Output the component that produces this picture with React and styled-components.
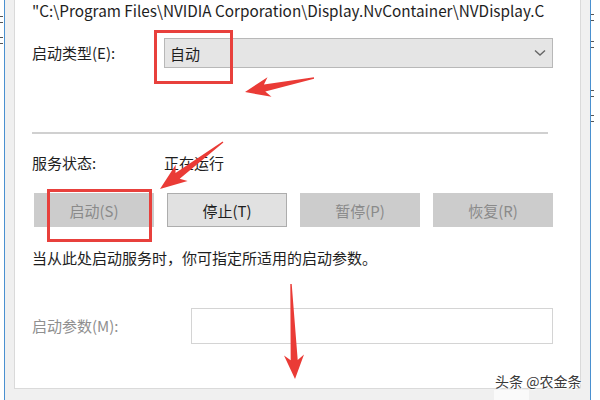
import React from "react";
import styled, { createGlobalStyle } from "styled-components";

const GlobalStyle = createGlobalStyle`
  html, body {
    margin: 0;
    padding: 0;
    background: #f0f0f0;
    overflow: hidden;
  }
  body {
    font-family: "Noto Sans CJK SC", "Noto Sans", sans-serif;
  }
`;

// arrow polygon: thin tail widening toward a swept-back head
const arrowPoints = (tail, tip, headLen, headW, neckW, tailW) => {
  const dx = tip[0] - tail[0];
  const dy = tip[1] - tail[1];
  const len = Math.hypot(dx, dy);
  const ux = dx / len;
  const uy = dy / len;
  const nx = -uy;
  const ny = ux;
  const neck = [tip[0] - ux * headLen, tip[1] - uy * headLen];
  const barb = [tip[0] - ux * (headLen + 5), tip[1] - uy * (headLen + 5)];
  const p = (base, w) => [base[0] + nx * w, base[1] + ny * w];
  const pts = [
    p(tail, tailW / 2),
    p(neck, neckW / 2),
    p(barb, headW / 2),
    tip,
    p(barb, -headW / 2),
    p(neck, -neckW / 2),
    p(tail, -tailW / 2),
  ];
  return pts.map((q) => q.map((v) => v.toFixed(1)).join(",")).join(" ");
};

const arrows = [
  { tail: [314, 78], tip: [245, 92], headLen: 20, headW: 20, neckW: 7, tailW: 1.5 },
  { tail: [223, 142], tip: [160, 189], headLen: 22, headW: 20, neckW: 7, tailW: 1.5 },
  { tail: [291, 284], tip: [295, 379], headLen: 19, headW: 20, neckW: 7, tailW: 1.5 },
];

const buttons = [
  { label: "启动(S)", active: false },
  { label: "停止(T)", active: true },
  { label: "暂停(P)", active: false },
  { label: "恢复(R)", active: false },
];

// bits of the neighbouring windows that peek in at the edges
const leftMarks = [16, 14];
const rightMarks = [14, 20, 42, 18];

const App = () => {
  return (
    <>
      <GlobalStyle />
      <Screen>
        <LeftEdge>
          {leftMarks.map((t, i) => (
            <EdgeMark key={i} $top={t} />
          ))}
        </LeftEdge>
        <BlueLine />
        <Gutter />
        <Column>
          <Panel>
            <PathText>"C:\Program Files\NVIDIA Corporation\Display.NvContainer\NVDisplay.C</PathText>

            <FieldRow $top={18}>
              <Label $width={132}>启动类型(E):</Label>
              <Combo>
                <span>自动</span>
                <svg width="12" height="8" viewBox="0 0 12 8">
                  <path d="M1 1.5 L6 6 L11 1.5" fill="none" stroke="#666" strokeWidth="1.4" />
                </svg>
              </Combo>
            </FieldRow>

            <Divider />

            <FieldRow $top={19}>
              <Label $width={132}>服务状态:</Label>
              <Value>正在运行</Value>
            </FieldRow>

            <ButtonRow>
              {buttons.map((b) => (
                <ServiceButton key={b.label} $active={b.active}>
                  {b.label}
                </ServiceButton>
              ))}
            </ButtonRow>

            <Description>当从此处启动服务时，你可指定所适用的启动参数。</Description>

            <FieldRow $top={40}>
              <Label $width={159} $muted>
                启动参数(M):
              </Label>
              <ParamInput />
            </FieldRow>
          </Panel>
          <Footer>
            <FooterPatch />
          </Footer>
        </Column>
        <Gutter />
        <BlueLine />
        <RightEdge>
          {rightMarks.map((t, i) => (
            <EdgeMark key={i} $top={t} />
          ))}
        </RightEdge>

        <Highlight $x={154} $y={30} $w={79} $h={54} />
        <Highlight $x={47} $y={189} $w={105} $h={53} />

        <Annotations width="600" height="400" viewBox="0 0 600 400">
          {arrows.map((a, i) => (
            <polygon
              key={i}
              points={arrowPoints(a.tail, a.tip, a.headLen, a.headW, a.neckW, a.tailW)}
              fill="#ea3b36"
            />
          ))}
        </Annotations>

        <Watermark>头条 @农金条</Watermark>
      </Screen>
    </>
  );
};

// styled components
const Screen = styled.div`
  position: relative;
  display: flex;
  width: 600px;
  height: 400px;
  overflow: hidden;
  background: #f0f0f0;
`;

const LeftEdge = styled.div`
  width: 4px;
  background: #ffffff;
  display: flex;
  flex-direction: column;
`;

const EdgeMark = styled.div`
  width: 3px;
  height: 7px;
  margin-top: ${(p) => p.$top}px;
  border-top: 1px solid #555;
  border-bottom: 1px solid #555;
  box-sizing: border-box;
`;

const BlueLine = styled.div`
  width: 1px;
  background: #4a90d0;
`;

const Gutter = styled.div`
  width: 9px;
  background: #f0f0f0;
`;

const Column = styled.div`
  flex: 1;
  display: flex;
  flex-direction: column;
`;

const Panel = styled.div`
  height: 389px;
  box-sizing: border-box;
  background: #ffffff;
  border: 1px solid #dadada;
  border-top: none;
  padding: 0 27px 0 17px;
  display: flex;
  flex-direction: column;
`;

const Footer = styled.div`
  flex: 1;
  background: #f0f0f0;
  padding-left: 480px;
`;

const FooterPatch = styled.div`
  width: 35px;
  height: 100%;
  margin-top: 1px;
  background: #fafafa;
`;

const PathText = styled.div`
  font-size: 15.3px;
  line-height: 20px;
  color: #1e1e1e;
  white-space: nowrap;
`;

const FieldRow = styled.div`
  display: flex;
  align-items: center;
  margin-top: ${(p) => p.$top}px;
`;

const Label = styled.div`
  width: ${(p) => p.$width}px;
  flex-shrink: 0;
  font-size: 15px;
  line-height: 20px;
  color: ${(p) => (p.$muted ? "#8f8f8f" : "#1e1e1e")};
`;

const Value = styled.div`
  font-size: 15px;
  line-height: 20px;
  color: #1e1e1e;
`;

const Combo = styled.div`
  flex: 1;
  height: 30px;
  box-sizing: border-box;
  background: #e5e5e5;
  border: 1px solid #b8b8b8;
  display: flex;
  align-items: center;
  justify-content: space-between;
  padding: 0 5px 0 5px;
  font-size: 15px;
  color: #1e1e1e;

  svg {
    margin-right: 1px;
  }
`;

const Divider = styled.div`
  height: 2px;
  margin-top: 64px;
  margin-right: 5px;
  background: #d0d0d0;
`;

const ButtonRow = styled.div`
  display: flex;
  gap: 13px;
  margin-top: 20px;
  padding-left: 2px;
`;

const ServiceButton = styled.div`
  width: 120px;
  height: 34px;
  box-sizing: border-box;
  display: flex;
  align-items: center;
  justify-content: center;
  font-size: 15px;
  background: ${(p) => (p.$active ? "#e1e1e1" : "#cccccc")};
  border: 1px solid ${(p) => (p.$active ? "#adadad" : "#cccccc")};
  color: ${(p) => (p.$active ? "#1e1e1e" : "#8a8a8a")};
`;

const Description = styled.div`
  margin-top: 21px;
  font-size: 15px;
  line-height: 20px;
  color: #1e1e1e;
`;

const ParamInput = styled.div`
  flex: 1;
  height: 36px;
  box-sizing: border-box;
  border: 1px solid #d4d4d4;
  background: #ffffff;
`;

const RightEdge = styled.div`
  flex: 1;
  background: #ffffff;
  display: flex;
  flex-direction: column;
`;

const Highlight = styled.div`
  position: absolute;
  left: ${(p) => p.$x}px;
  top: ${(p) => p.$y}px;
  width: ${(p) => p.$w}px;
  height: ${(p) => p.$h}px;
  border: 3px solid #e8403c;
  box-sizing: border-box;
`;

const Annotations = styled.svg`
  position: absolute;
  left: 0;
  top: 0;
  pointer-events: none;
`;

const Watermark = styled.div`
  position: absolute;
  left: 495px;
  top: 371px;
  font-size: 14px;
  line-height: 20px;
  color: #3a3a3a;
  text-shadow: 0 0 2px #fff, 0 0 2px #fff, 1px 1px 1px #fff;
`;

export default App;
